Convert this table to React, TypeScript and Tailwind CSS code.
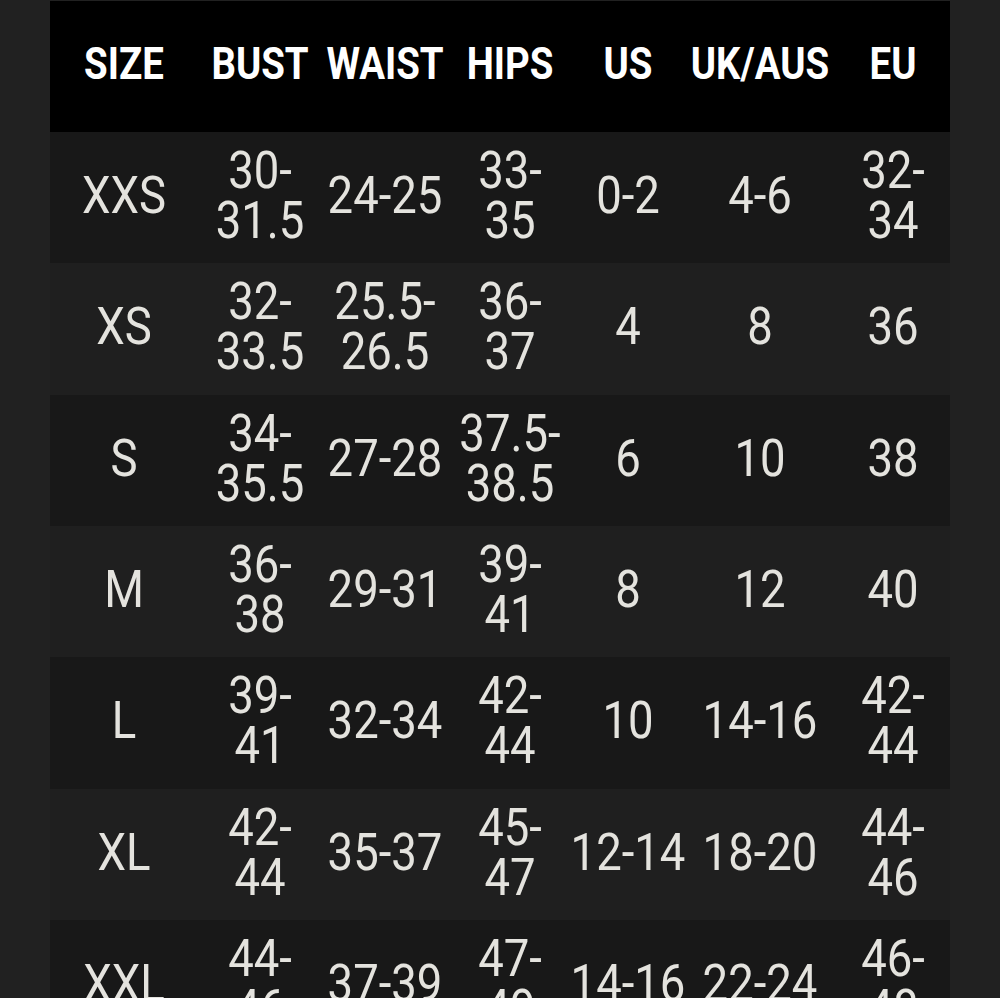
import React from "react";

const headers = ["SIZE", "BUST", "WAIST", "HIPS", "US", "UK/AUS", "EU"];

type Cell = string[];
const rows: Cell[][] = [
  [["XXS"], ["30-", "31.5"], ["24-25"], ["33-", "35"], ["0-2"], ["4-6"], ["32-", "34"]],
  [["XS"], ["32-", "33.5"], ["25.5-", "26.5"], ["36-", "37"], ["4"], ["8"], ["36"]],
  [["S"], ["34-", "35.5"], ["27-28"], ["37.5-", "38.5"], ["6"], ["10"], ["38"]],
  [["M"], ["36-", "38"], ["29-31"], ["39-", "41"], ["8"], ["12"], ["40"]],
  [["L"], ["39-", "41"], ["32-34"], ["42-", "44"], ["10"], ["14-16"], ["42-", "44"]],
  [["XL"], ["42-", "44"], ["35-37"], ["45-", "47"], ["12-14"], ["18-20"], ["44-", "46"]],
  [["XXL"], ["44-", "46"], ["37-39"], ["47-", "49"], ["14-16"], ["22-24"], ["46-", "48"]],
];

const grid = "grid grid-cols-[148px_124px_126px_124px_112px_152px_114px]";

export default function App() {
  return (
    <div className="h-[998px] overflow-hidden bg-[#212121] px-[50px] pt-px" style={{ fontFamily: "Roboto, 'Noto Sans', sans-serif" }}>
      <div className={`${grid} h-[131px] bg-black`}>
        {headers.map((h) => (
          <div key={h} className="flex items-center justify-center pb-[5px]">
            <span className="inline-block scale-y-[1.16] whitespace-nowrap text-[38.4px] font-bold leading-none text-white">
              {h}
            </span>
          </div>
        ))}
      </div>
      {rows.map((r, i) => (
        <div key={i} className={`${grid} h-[131.33px] ${i % 2 === 0 ? "bg-[#181818]" : "bg-[#1f1f1f]"}`}>
          {r.map((lines, j) => (
            <div key={j} className="flex flex-col items-center justify-center pb-[3px]">
              {lines.map((l, k) => (
                <span key={k} className="inline-block scale-y-[1.12] whitespace-nowrap text-[45.5px] leading-[50px] text-[#e4e3de]">
                  {l}
                </span>
              ))}
            </div>
          ))}
        </div>
      ))}
    </div>
  );
}
